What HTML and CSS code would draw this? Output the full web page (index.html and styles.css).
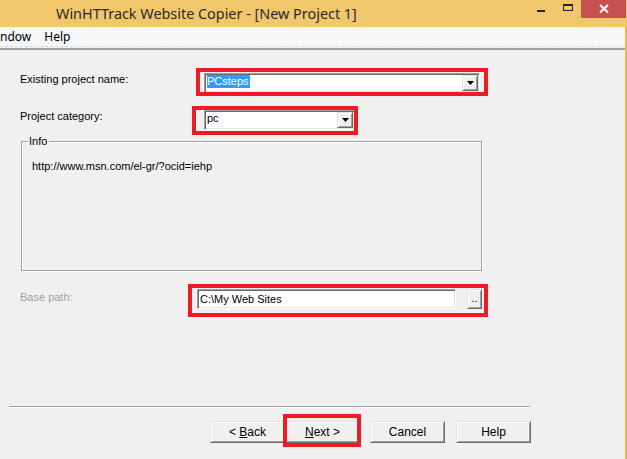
FILE: index.html
```html
<!DOCTYPE html>
<html>
<head>
<meta charset="utf-8">
<link rel="stylesheet" href="styles.css">
</head>
<body>
<div class="window">
  <div class="titlebar">
    <div class="title">WinHTTrack Website Copier - [New Project 1]</div>
    <div class="controls">
      <span class="ctl min"><svg width="26" height="20" viewBox="0 0 26 20"><rect x="9" y="10" width="8" height="2" fill="#222"/></svg></span>
      <span class="ctl max"><svg width="27" height="20" viewBox="0 0 27 20"><rect x="9.5" y="4.5" width="9" height="6" fill="none" stroke="#222" stroke-width="1"/><rect x="9" y="4" width="10" height="2" fill="#222"/></svg></span>
      <span class="ctl close"><svg width="45" height="18" viewBox="0 0 45 18"><path d="M19 5 L27 12.5 M27 5 L19 12.5" stroke="#fff" stroke-width="2" fill="none"/></svg></span>
    </div>
  </div>
  <div class="frame">
    <div class="menubar"><span class="menu first">ndow</span><span class="menu">Help</span></div>
    <div class="menuline"></div>
    <div class="content">
      <div class="row">
        <label class="lbl">Existing project name:</label>
        <div class="combo wide mark mark-a"><span class="val sel">PCsteps</span><span class="dd"><svg width="7" height="4" viewBox="0 0 7 4"><polygon points="0,0 7,0 3.5,4" fill="#000"/></svg></span></div>
      </div>
      <div class="row second">
        <label class="lbl">Project category:</label>
        <div class="combo narrow mark mark-b"><span class="val">pc</span><span class="dd"><svg width="7" height="4" viewBox="0 0 7 4"><polygon points="0,0 7,0 3.5,4" fill="#000"/></svg></span></div>
      </div>
      <div class="group">
        <span class="legend">Info</span>
        <div class="url">http://www.msn.com/el-gr/?ocid=iehp</div>
      </div>
      <div class="row base">
        <label class="lbl lbl-base">Base path:</label>
        <div class="pathwrap mark mark-c">
          <div class="field"><span class="val">C:\My Web Sites</span></div>
          <span class="browse">..</span>
        </div>
      </div>
      <div class="sep"></div>
      <div class="buttons">
        <span class="btn"><span class="cap">&lt; <u>B</u>ack</span></span>
        <span class="btn mark mark-d"><span class="cap"><u>N</u>ext &gt;</span></span>
        <span class="btn cancel"><span class="cap">Cancel</span></span>
        <span class="btn help"><span class="cap">Help</span></span>
      </div>
    </div>
  </div>
</div>
</body>
</html>
```
FILE: styles.css
```css
html, body {
  margin: 0;
  padding: 0;
}
body {
  width: 627px;
  height: 459px;
  overflow: hidden;
  background: #f0f0f0;
  font-family: "Liberation Sans", Arial, sans-serif;
  font-size: 11px;
  color: #000;
}
.window {
  display: flex;
  flex-direction: column;
  height: 459px;
}
.titlebar {
  height: 27px;
  background: #f1c76b;
  display: flex;
  flex-shrink: 0;
}
.title {
  padding-left: 56px;
  line-height: 27px;
  font-family: "Noto Sans", "Open Sans", sans-serif;
  font-size: 14.4px;
  color: #2b2b2b;
  white-space: nowrap;
}
.controls {
  margin-left: auto;
  margin-right: 1px;
  display: flex;
  align-items: flex-start;
}
.ctl {
  display: block;
  line-height: 0;
}
.close {
  background: #c75050;
}
.frame {
  flex: 1;
  border-right: 2px solid #e8bb58;
  background: #f0f0f0;
  display: flex;
  flex-direction: column;
}
.menubar {
  height: 19px;
  background: #f5f6f7;
  border-bottom: 1px dashed #dcdcdc;
  display: flex;
  align-items: center;
  font-family: "Noto Sans", "Open Sans", sans-serif;
  font-size: 12px;
  color: #000;
}
.menu {
  white-space: nowrap;
}
.menu.first {
  margin-right: 13px;
}
.menuline {
  height: 1px;
  background: #f0f0f0;
  border-bottom: 2px solid #a0a0a0;
}
.content {
  padding-left: 20px;
  padding-top: 23px;
  display: flex;
  flex-direction: column;
}
.row {
  display: flex;
  align-items: flex-start;
}
.row.second {
  margin-top: 17px;
}
.lbl {
  width: 184px;
  line-height: 13px;
  flex-shrink: 0;
}
.mark {
  position: relative;
}
.mark::after {
  content: "";
  position: absolute;
  border: 4px solid #ed1c24;
  pointer-events: none;
}
.mark-a::after { top: -6px; left: -9px; right: -9px; bottom: -4px; }
.mark-b::after { top: -5px; left: -13px; right: -4px; bottom: -6px; }
.mark-c::after { top: -5px; left: -9px; right: -6px; bottom: -8px; }
.mark-d::after { top: -8px; left: -3px; right: -2px; bottom: -5px; }
.combo, .field {
  box-sizing: border-box;
  height: 20px;
  background: #fff;
  border-top: 1px solid #a0a0a0;
  border-left: 1px solid #a0a0a0;
  border-bottom: 1px solid #fff;
  border-right: 1px solid #fff;
  box-shadow: inset 1px 1px 0 #696969, inset -1px -1px 0 #e3e3e3;
  padding: 1px;
  display: flex;
  align-items: flex-start;
}
.combo.wide { width: 276px; }
.combo.narrow { width: 151px; }
.val {
  line-height: 13px;
  margin-left: 1px;
  white-space: nowrap;
}
.sel {
  background: #3399ff;
  color: #fff;
  padding-right: 1px;
}
.dd {
  margin-left: auto;
  box-sizing: border-box;
  width: 16px;
  height: 16px;
  background: #f0f0f0;
  border-top: 1px solid #e3e3e3;
  border-left: 1px solid #e3e3e3;
  border-bottom: 1px solid #696969;
  border-right: 1px solid #696969;
  box-shadow: inset 1px 1px 0 #fff, inset -1px -1px 0 #a0a0a0;
  display: flex;
  align-items: center;
  justify-content: center;
  line-height: 0;
}
.group {
  margin-top: 11px;
  margin-left: 1px;
  box-sizing: border-box;
  width: 461px;
  height: 130px;
  border: 1px solid #a0a0a0;
  box-shadow: 1px 1px 0 #fff, inset 1px 1px 0 #fff;
  display: flex;
  flex-direction: column;
  align-items: flex-start;
}
.legend {
  margin-top: -7px;
  margin-left: 6px;
  padding: 0 2px 0 1px;
  background: #f0f0f0;
  line-height: 13px;
}
.url {
  margin-top: 12px;
  margin-left: 10px;
  line-height: 13px;
}
.row.base {
  margin-top: 18px;
}
.lbl-base {
  width: 177px;
  padding-top: 2px;
  color: #a0a0a0;
}
.pathwrap {
  display: flex;
  align-items: flex-start;
}
.field {
  width: 259px;
  align-items: center;
}
.browse {
  margin-left: 11px;
  box-sizing: border-box;
  width: 15px;
  height: 20px;
  background: #f0f0f0;
  border-top: 1px solid #e3e3e3;
  border-left: 1px solid #e3e3e3;
  border-bottom: 1px solid #696969;
  border-right: 1px solid #696969;
  box-shadow: inset 1px 1px 0 #fff, inset -1px -1px 0 #a0a0a0;
  text-align: center;
  line-height: 16px;
  font-size: 11px;
}
.sep {
  margin-top: 97px;
  margin-left: -11px;
  width: 521px;
  height: 1px;
  background: #a0a0a0;
  border-bottom: 1px solid #fff;
}
.buttons {
  margin-top: 13px;
  padding-left: 190px;
  display: flex;
}
.btn {
  box-sizing: border-box;
  width: 75px;
  height: 22px;
  background: #f0f0f0;
  border-top: 1px solid #e3e3e3;
  border-left: 1px solid #e3e3e3;
  border-bottom: 1px solid #696969;
  border-right: 1px solid #696969;
  box-shadow: inset 1px 1px 0 #fff, inset -1px -1px 0 #a0a0a0;
  display: flex;
  align-items: center;
  justify-content: center;
  font-size: 12px;
}
.cap {
  white-space: pre;
}
.btn.cancel { margin-left: 10px; }
.btn.help { margin-left: 11px; }
```
